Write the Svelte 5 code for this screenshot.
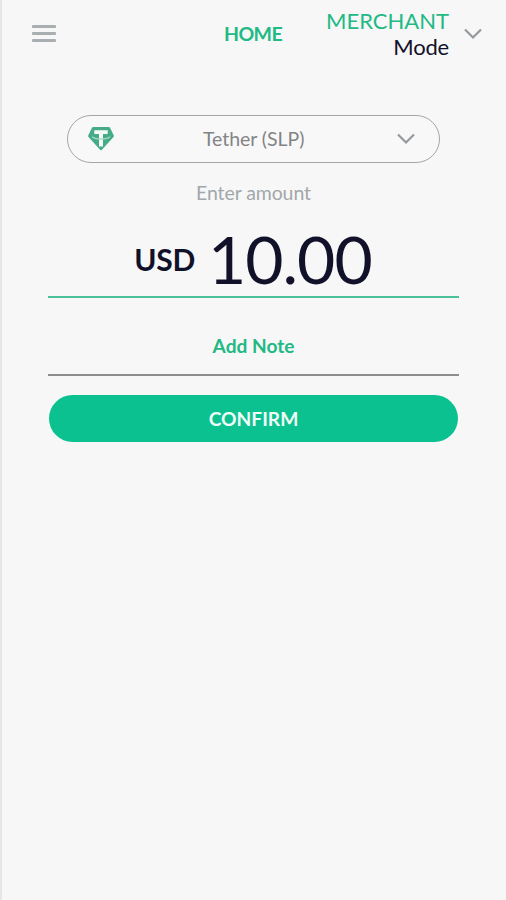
<script>
  const currency = 'USD';
  const amount = '10.00';
  const token = 'Tether (SLP)';
</script>

<div class="app">
  <header>
    <button class="menu" aria-label="Menu"><i></i><i></i><i></i></button>
    <h1>HOME</h1>
    <div class="mode">
      <div class="labels"><span class="merchant">MERCHANT</span><span class="sub">Mode</span></div>
      <svg width="20" height="14" viewBox="0 0 20 14"><path d="M2 2.5L10 10.5L18 2.5" /></svg>
    </div>
  </header>
  <main>
    <div class="select">
      <svg class="tether" width="28" height="26" viewBox="0 0 28 26">
        <path fill="#45ac87" d="M6.2 1H21.8Q22.5 1 22.9 1.6L26.8 9.6Q27.1 10.4 26.5 11L14.7 24Q14 24.6 13.3 24L1.5 11Q0.9 10.4 1.2 9.6L5.1 1.6Q5.5 1 6.2 1Z" />
        <path fill="#f7f9f8" d="M7.3 4.3H20.7V8H16V20.4H12V8H7.3Z" />
        <path fill="none" stroke="#a9d9c7" stroke-width="1.3" d="M5 10.8C6.5 12.3 9.5 13 14 13S21.5 12.3 23 10.8" />
      </svg>
      <span>{token}</span>
      <svg class="chev" width="20" height="14" viewBox="0 0 20 14"><path d="M2 2.5L10 10.5L18 2.5" /></svg>
    </div>
    <label for="amount">Enter amount</label>
    <div class="amount" id="amount"><span class="cur">{currency}</span><span class="num">{amount}</span></div>
    <div class="note">Add Note</div>
    <button class="confirm">CONFIRM</button>
  </main>
</div>

<style>
  :global(body) { background: #f7f7f7; }
  .app {
    box-sizing: border-box;
    width: 506px;
    height: 900px;
    border-left: 2px solid #e6e6e6;
    background: #f7f7f7;
    font-family: Lato, "Liberation Sans", sans-serif;
    color: #12112a;
    overflow: hidden;
  }
  button { border: 0; padding: 0; font-family: inherit; }
  header {
    display: grid;
    grid-template-columns: 192px auto 1fr;
    align-items: center;
    height: 67px;
    padding: 0 23px 0 30px;
  }
  .menu { display: flex; flex-direction: column; gap: 4px; width: 24px; background: none; }
  .menu i { height: 3px; background: #a9aeb0; border-radius: 1px; }
  h1 { margin: 0; font-size: 19.5px; line-height: 24px; font-weight: 700; letter-spacing: -0.6px; color: #23b985; }
  .mode { display: flex; align-items: center; justify-content: flex-end; gap: 14px; }
  .labels { display: flex; flex-direction: column; text-align: right; font-size: 22px; line-height: 26px; }
  .merchant { color: #23b985; }
  .sub { letter-spacing: -0.2px; }
  svg { display: block; }
  .mode svg, .chev { fill: none; stroke: #96999c; stroke-width: 2.2; }
  main { display: flex; flex-direction: column; margin: 0 47px 0 46px; }
  .select {
    box-sizing: border-box;
    display: grid;
    grid-template-columns: 116px auto 1fr;
    align-items: center;
    height: 48px;
    margin: 48px 19px 0;
    padding: 0 23px 0 19px;
    border: 1.5px solid #a6a6a6;
    border-radius: 24px;
    background: #f8f8f8;
    font-size: 19.5px;
    letter-spacing: -0.05px;
    color: #828486;
  }
  .select span { line-height: 24px; padding-bottom: 1px; }
  .chev { justify-self: end; }
  label { margin-top: 18px; text-align: center; font-size: 19.5px; line-height: 24px; letter-spacing: -0.1px; color: #a2a7ab; }
  .amount {
    box-sizing: border-box;
    display: flex;
    align-items: center;
    justify-content: center;
    gap: 13px;
    height: 93px;
    padding: 17px 2px 0 0;
    border-bottom: 2px solid #4cc29c;
  }
  .cur { font-size: 30px; font-weight: 700; letter-spacing: -0.3px; }
  .num { font-size: 66px; line-height: 72px; letter-spacing: -1px; margin-right: -1px; }
  .note {
    box-sizing: border-box;
    height: 78px;
    padding-top: 36px;
    border-bottom: 2px solid #8e8c8d;
    text-align: center;
    font-size: 19.1px;
    line-height: 24px;
    font-weight: 700;
    color: #23b985;
  }
  .confirm {
    height: 47px;
    margin: 19px 1px 0;
    border-radius: 24px;
    background: #0bc18f;
    color: #effcf7;
    font-size: 19.2px;
    font-weight: 700;
  }
</style>
